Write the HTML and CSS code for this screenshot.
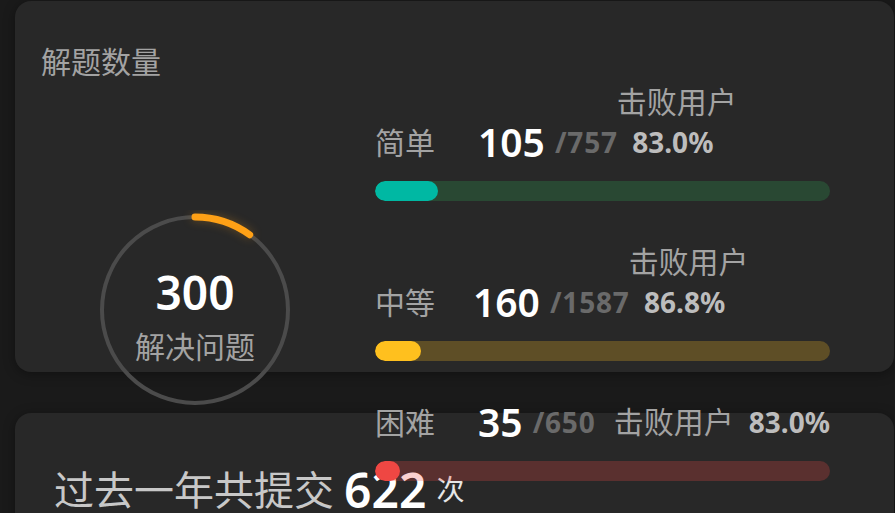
FILE: index.html
```html
<!DOCTYPE html>
<html lang="zh-CN">
<head>
<meta charset="utf-8">
<title>解题数量</title>
<link rel="stylesheet" href="styles.css">
</head>
<body>
<div class="page">
  <section class="card card-solved">
    <h2 class="title">解题数量</h2>
    <div class="solved-body">
      <div class="ring">
        <svg class="ring-svg" width="200" height="200" viewBox="0 0 200 200">
          <circle cx="100" cy="100" r="93" fill="none" stroke="#4b4b4b" stroke-width="4"/>
          <path class="arc" d="M100 7 A93 93 0 0 1 154.66 24.76" fill="none" stroke="#ffa116" stroke-width="7" stroke-linecap="round"/>
        </svg>
        <div class="ring-text">
          <div class="ring-num">300</div>
          <div class="ring-label">解决问题</div>
        </div>
      </div>
      <div class="levels">
        <div class="level">
          <div class="row">
            <span class="lvl-label">简单</span>
            <span class="lvl-num">105</span>
            <span class="lvl-total">/757</span>
            <span class="beat beat-stack"><span class="beat-text">击败用户</span><span class="beat-pct">83.0%</span></span>
          </div>
          <div class="bar bar-easy"><div class="fill" style="width:13.9%"></div></div>
        </div>
        <div class="level">
          <div class="row row-medium">
            <span class="lvl-label">中等</span>
            <span class="lvl-num">160</span>
            <span class="lvl-total">/1587</span>
            <span class="beat beat-stack"><span class="beat-text">击败用户</span><span class="beat-pct">86.8%</span></span>
          </div>
          <div class="bar bar-medium"><div class="fill" style="width:10.1%"></div></div>
        </div>
        <div class="level">
          <div class="row">
            <span class="lvl-label">困难</span>
            <span class="lvl-num">35</span>
            <span class="lvl-total">/650</span>
            <span class="beat beat-inline"><span class="beat-text">击败用户</span><span class="beat-pct">83.0%</span></span>
          </div>
          <div class="bar bar-hard"><div class="fill" style="width:5.4%"></div></div>
        </div>
      </div>
    </div>
  </section>
  <section class="card card-submit">
    <div class="submit-line">
      <span class="submit-text">过去一年共提交</span>
      <span class="submit-num">622</span>
      <span class="submit-unit">次</span>
    </div>
  </section>
</div>
</body>
</html>
```

FILE: styles.css
```css
* { box-sizing: border-box; }

html, body {
  margin: 0;
  padding: 0;
  background: #1a1a1a;
  overflow: hidden;
}

body {
  width: 895px;
  height: 513px;
  font-family: "Noto Sans", "Noto Sans CJK SC", sans-serif;
  color: #a3a3a3;
}

.page {
  padding: 1px 1px 0 15px;
}

.card {
  background: #282828;
  border-radius: 16px;
  box-shadow: 0 2px 12px rgba(0, 0, 0, 0.35);
}

.card-solved {
  position: relative;
  z-index: 1;
  height: 371px;
  padding: 41px 0 0 26px;
}

.title {
  margin: 0;
  font-size: 30px;
  line-height: 40px;
  font-weight: 400;
  color: #a3a3a3;
}

.solved-body {
  display: flex;
  align-items: flex-start;
}

.ring {
  display: grid;
  margin: 128px 0 0 54px;
  width: 200px;
  height: 200px;
  flex: none;
}

.ring > * {
  grid-area: 1 / 1;
}

.ring-svg {
  display: block;
}

.arc {
  filter: drop-shadow(0 0 5px rgba(255, 161, 22, 0.3));
}

.ring-text {
  justify-self: center;
  align-self: start;
  margin-top: 59px;
  text-align: center;
}

.ring-num {
  font-size: 46px;
  line-height: 46px;
  font-weight: 600;
  color: #ffffff;
}

.ring-label {
  margin-top: 12px;
  font-size: 30px;
  line-height: 40px;
  color: #a3a3a3;
}

.levels {
  margin-left: 80px;
  width: 455px;
  flex: none;
}

.level + .level {
  margin-top: 41px;
}

.row {
  display: flex;
  align-items: flex-end;
}

.lvl-label {
  width: 60px;
  flex: none;
  font-size: 30px;
  line-height: 38px;
  color: #a3a3a3;
}

.lvl-num {
  margin-left: 43px;
  margin-right: 10px;
  font-size: 39px;
  line-height: 40px;
  font-weight: 600;
  color: #ffffff;
}

.row-medium .lvl-num {
  margin-left: 38px;
}

.lvl-total {
  font-size: 28px;
  line-height: 40px;
  font-weight: 700;
  letter-spacing: 0.8px;
  color: #6a6a6a;
}

.beat-text {
  font-size: 30px;
  line-height: 40px;
  color: #a3a3a3;
  white-space: nowrap;
}

.beat-pct {
  font-size: 28px;
  line-height: 40px;
  font-weight: 700;
  color: #bdbdbd;
}

.beat-stack {
  display: flex;
  flex-direction: column;
  align-items: center;
  margin-left: -1px;
}

.beat-stack .beat-pct {
  margin-right: 8px;
}

.beat-inline {
  display: flex;
  align-items: flex-end;
  gap: 15px;
  margin-left: auto;
}

.bar {
  margin-top: 19px;
  height: 20px;
  border-radius: 10px;
  overflow: hidden;
}

.fill {
  height: 100%;
  border-radius: 10px;
}

.bar-easy { background: rgba(44, 187, 93, 0.22); }
.bar-easy .fill { background: #00b8a3; }
.bar-medium { background: rgba(255, 192, 30, 0.25); }
.bar-medium .fill { background: #ffc01e; }
.bar-hard { background: rgba(239, 71, 67, 0.25); }
.bar-hard .fill { background: #ef4743; }

.card-submit {
  margin-top: 41px;
  height: 150px;
  padding: 46px 0 0 39px;
}

.submit-line {
  display: flex;
  align-items: flex-end;
}

.submit-text {
  font-size: 40px;
  line-height: 61px;
  color: #c8c8c8;
}

.submit-num {
  margin-left: 10px;
  font-size: 48px;
  line-height: 61px;
  font-weight: 600;
  color: #ffffff;
}

.submit-unit {
  margin-left: 10px;
  font-size: 28px;
  line-height: 61px;
  color: #e6e6e6;
}
```
